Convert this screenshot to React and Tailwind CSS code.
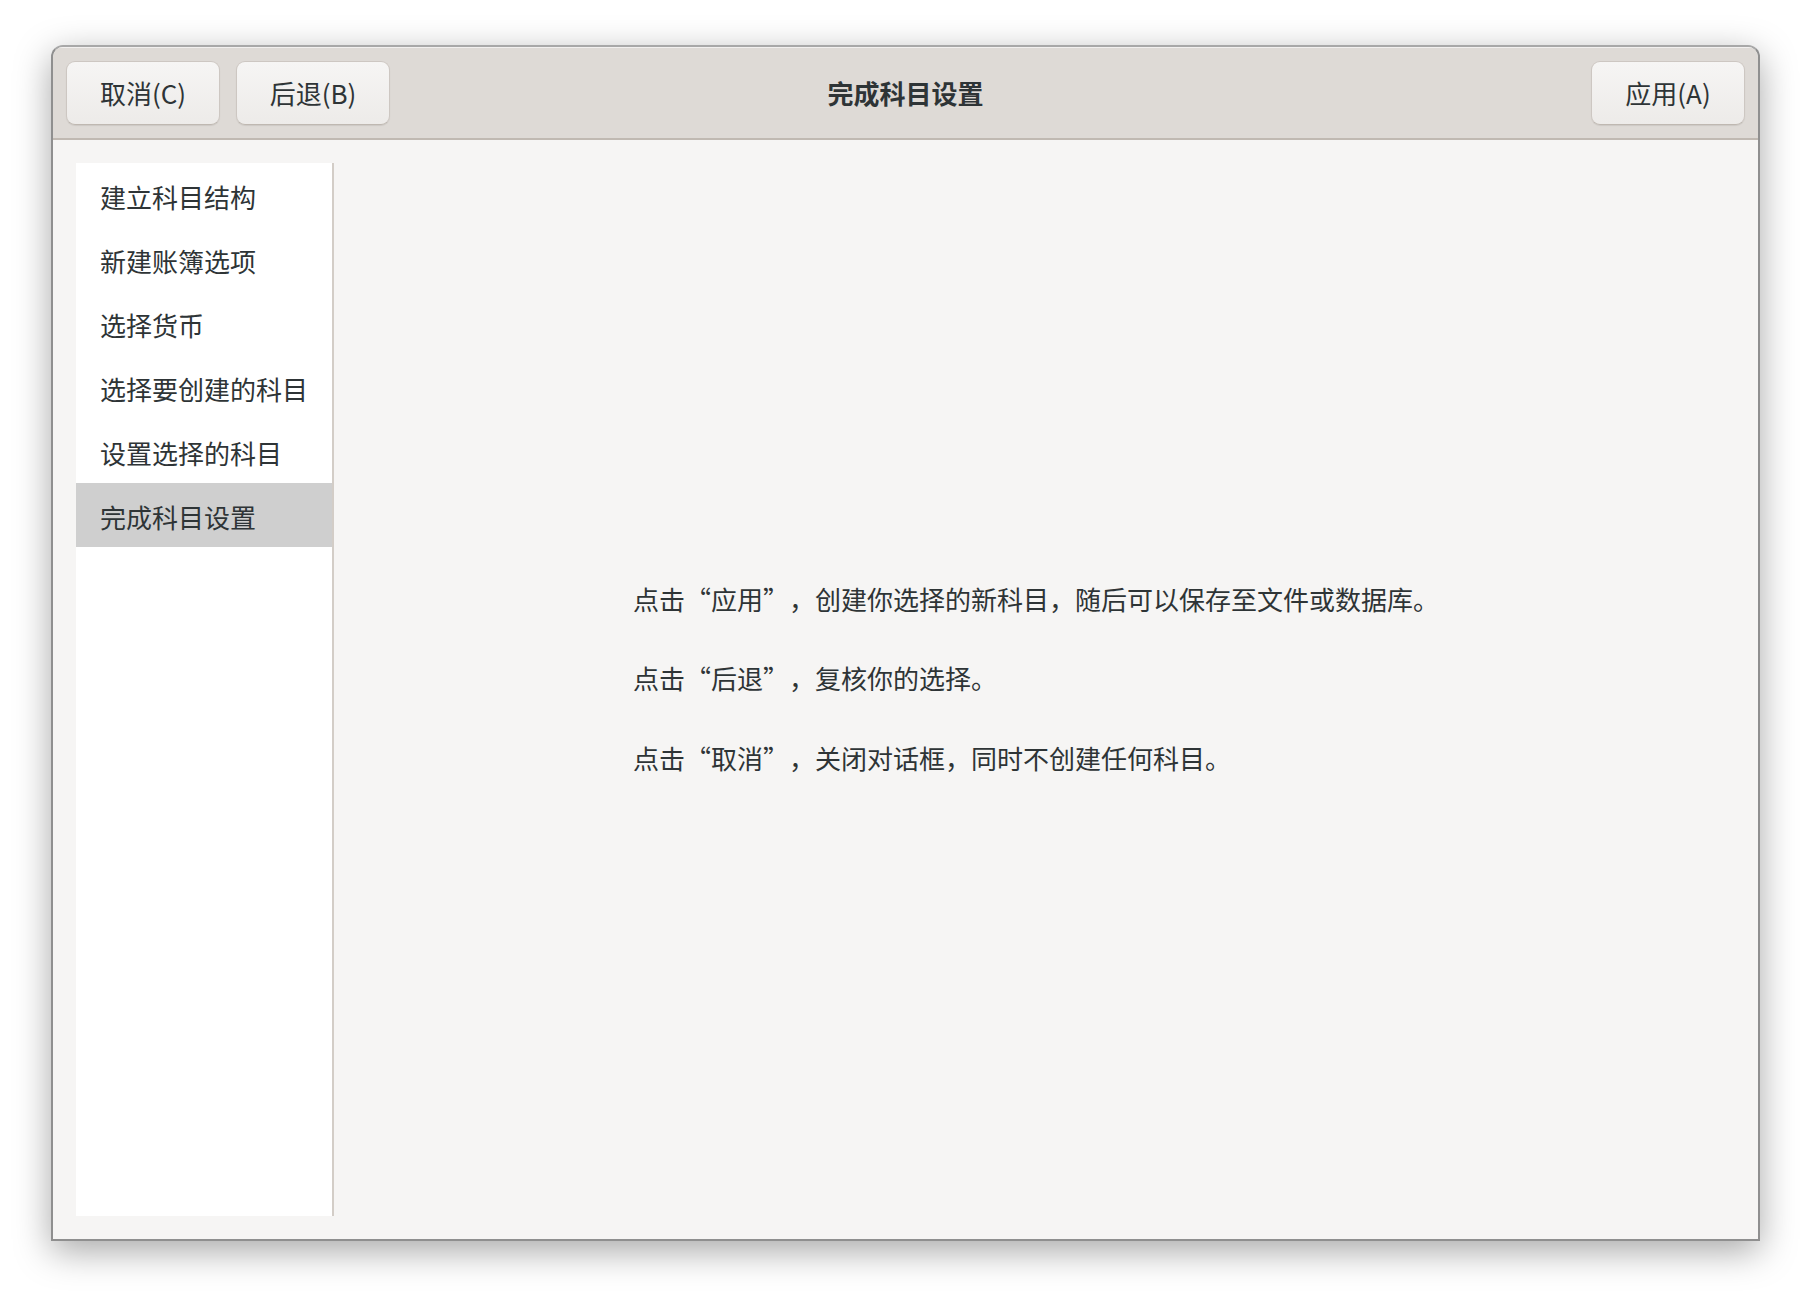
import React from 'react';

const FONT = { fontFamily: '"Noto Sans CJK SC", "Noto Sans", sans-serif' };

const pasos = [
  '建立科目结构',
  '新建账簿选项',
  '选择货币',
  '选择要创建的科目',
  '设置选择的科目',
  '完成科目设置',
];

function Boton({ children }) {
  return (
    <button className="w-[154px] h-[64px] rounded-[9px] border border-[#cdc7c2] border-b-[#bfb8b1] bg-gradient-to-b from-[#f6f5f4] to-[#edebe9] shadow-[0_1px_1px_rgba(0,0,0,0.08)] text-[26px] text-[#2e3436]">
      {children}
    </button>
  );
}

export default function App() {
  const actual = 5;

  return (
    <div className="w-[1812px] h-[1298px] bg-white pt-[45px] pl-[51px] [text-spacing-trim:space-all]" style={FONT}>
      <div className="w-[1709px] h-[1196px] flex flex-col rounded-t-[12px] border-2 border-[#8f8f8f] border-t-[#a8a8a8] bg-[#f6f5f4] shadow-[0_10px_36px_rgba(0,0,0,0.35)] overflow-hidden">
        {/* barra de título */}
        <div className="relative h-[93px] shrink-0 flex items-center px-[13px] gap-[16px] bg-[#dedad6] border-b-2 border-[#c0b9b2] shadow-[inset_0_1px_0_rgba(255,255,255,0.6)]">
          <Boton>取消(C)</Boton>
          <Boton>后退(B)</Boton>
          <div className="absolute inset-0 flex items-center justify-center pointer-events-none">
            <span className="text-[26px] font-bold text-[#2e3436]">完成科目设置</span>
          </div>
          <div className="ml-auto">
            <Boton>应用(A)</Boton>
          </div>
        </div>

        <div className="flex-1 flex min-h-0">
          {/* lista de pasos */}
          <div className="py-[23px] pl-[23px] shrink-0 flex">
            <div className="w-[258px] bg-white border-r-2 border-[#d3cdc7]">
              {pasos.map((p, i) => (
                <div
                  key={i}
                  className={`h-[64px] flex items-center pl-[24px] pt-[2px] text-[26px] text-[#2e3436] ${i === actual ? 'bg-[#cfcfcf]' : ''}`}
                >
                  {p}
                </div>
              ))}
            </div>
          </div>

          {/* texto */}
          <div className="flex-1 flex items-center pl-[299px] pb-[23px]">
            <div className="text-[26px] leading-[39.75px] text-[#2e3436] whitespace-pre">
              <p>点击“应用”，创建你选择的新科目，随后可以保存至文件或数据库。</p>
              <p>&nbsp;</p>
              <p>点击“后退”，复核你的选择。</p>
              <p>&nbsp;</p>
              <p>点击“取消”，关闭对话框，同时不创建任何科目。</p>
            </div>
          </div>
        </div>
      </div>
    </div>
  );
}
